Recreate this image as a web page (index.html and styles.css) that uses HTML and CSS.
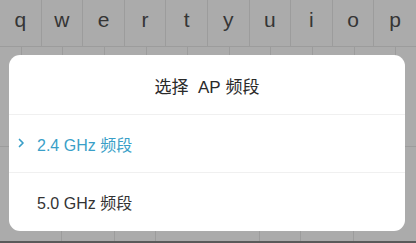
FILE: index.html
```html
<!DOCTYPE html>
<html>
<head>
<meta charset="utf-8">
<link rel="stylesheet" href="styles.css">
</head>
<body>
<div class="screen">
  <div class="keyboard">
    <div class="row row1">
      <div class="key">q</div><div class="key">w</div><div class="key">e</div><div class="key">r</div><div class="key">t</div><div class="key">y</div><div class="key">u</div><div class="key">i</div><div class="key">o</div><div class="key last">p</div>
    </div>
    <div class="row row2">
      <div class="key"></div><div class="key"></div><div class="key"></div><div class="key"></div><div class="key"></div><div class="key"></div><div class="key"></div><div class="key"></div><div class="key"></div><div class="key"></div>
    </div>
    <div class="row row3">
      <div class="seg s62"></div><div class="seg s53"></div><div class="seg s41"></div><div class="seg s104"></div><div class="seg s41"></div><div class="seg s53"></div><div class="seg s62 last"></div>
    </div>
    <div class="bottom-line"></div>
  </div>
  <div class="dialog">
    <div class="title">选择&nbsp;&nbsp;AP&nbsp;频段</div>
    <div class="item selected">
      <svg class="chev" width="7" height="10" viewBox="0 0 7 10"><path d="M1.5 1.5 L5 5 L1.5 8.5" fill="none" stroke="#3a9fc8" stroke-width="1.7" stroke-linecap="round" stroke-linejoin="round"/></svg>
      <span>2.4 GHz 频段</span>
    </div>
    <div class="item">
      <span>5.0 GHz 频段</span>
    </div>
  </div>
</div>
</body>
</html>
```

FILE: styles.css
```css
html, body {
  margin: 0;
  padding: 0;
}
body {
  width: 416px;
  height: 243px;
  overflow: hidden;
  background: #ababab;
  font-family: "Liberation Sans", "Noto Sans CJK SC", sans-serif;
}
.screen {
  position: relative;
  width: 416px;
  height: 243px;
  overflow: hidden;
}
.keyboard {
  display: flex;
  flex-direction: column;
  height: 243px;
}
.row {
  display: flex;
  box-sizing: border-box;
  overflow: hidden;
}
.row1 {
  height: 47px;
  border-bottom: 1px solid #9c9c9c;
}
.row1 .key {
  width: 41.6px;
  flex: none;
  box-sizing: border-box;
  border-right: 1px solid #9c9c9c;
  display: flex;
  justify-content: center;
  align-items: center;
  padding-bottom: 6px;
  font-size: 21px;
  color: #353535;
}
.row2 {
  height: 100px;
  padding-left: 20.8px;
  border-bottom: 1px solid #9c9c9c;
}
.row2 .key {
  width: 41.6px;
  flex: none;
  box-sizing: border-box;
  border-left: 1px solid #9c9c9c;
}
.row .last {
  border-right: none;
}
.row3 {
  flex: 1;
}
.seg {
  flex: none;
  box-sizing: border-box;
  border-right: 1px solid #9c9c9c;
}
.s62 { width: 62px; }
.s53 { width: 53px; }
.s41 { width: 41px; }
.s104 { width: 104px; }
.bottom-line {
  height: 2px;
  background: #5a5a5a;
}
.dialog {
  position: absolute;
  left: 9px;
  top: 55px;
  width: 396px;
  height: 176px;
  background: #fff;
  border-radius: 11px;
  display: flex;
  flex-direction: column;
}
.title {
  height: 60px;
  box-sizing: border-box;
  border-bottom: 1px solid #f0f0f0;
  display: flex;
  justify-content: center;
  align-items: center;
  font-size: 17px;
  color: #2a2a2a;
  padding-top: 1px;
}
.item {
  height: 58px;
  box-sizing: border-box;
  display: flex;
  align-items: center;
  padding-left: 28px;
  font-size: 16px;
  color: #333;
  position: relative;
}
.item.selected {
  border-bottom: 1px solid #f0f0f0;
  color: #3a9fc8;
}
.chev {
  position: absolute;
  left: 9px;
  top: 23px;
}
```
